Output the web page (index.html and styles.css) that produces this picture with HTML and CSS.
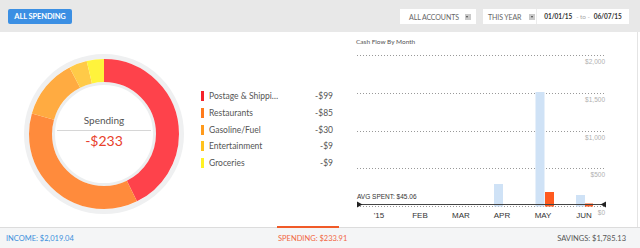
FILE: index.html
```html
<!DOCTYPE html>
<html>
  <head>
    <title>Spending</title>
    <link rel="stylesheet" href="styles.css">
  </head>
  <body>
    <div class="topbar">
      <button class="btn-primary">All Spending</button>
      <div class="filters">
        <div class="select accounts">All Accounts <span class="caret"></span></div>
        <div class="range">
          <div class="select period">This Year <span class="caret"></span></div>
          <div class="dates">
            <b>01/01/15</b><span class="to">- to -</span><b>06/07/15</b>
          </div>
        </div>
      </div>
    </div>

    <div class="main">
      <div class="donut-panel">
        <div class="donut">
          <svg width="164" height="164" viewBox="0 0 164 164">
            <circle cx="82" cy="82" r="77.5" class="ring-outer" />
            <circle cx="82" cy="82" r="50.5" class="ring-inner" />
            <g transform="rotate(-90 82 82)">
              <circle cx="82" cy="82" r="63.5" class="seg" stroke="#fe424b" stroke-dasharray="170.25 398.98" stroke-dashoffset="0" />
              <circle cx="82" cy="82" r="63.5" class="seg" stroke="#ff8b3c" stroke-dasharray="146.18 398.98" stroke-dashoffset="-170.25" />
              <circle cx="82" cy="82" r="63.5" class="seg" stroke="#ffab41" stroke-dasharray="51.59 398.98" stroke-dashoffset="-316.43" />
              <circle cx="82" cy="82" r="63.5" class="seg" stroke="#ffca48" stroke-dasharray="15.48 398.98" stroke-dashoffset="-368.02" />
              <circle cx="82" cy="82" r="63.5" class="seg" stroke="#fff33c" stroke-dasharray="15.48 398.98" stroke-dashoffset="-383.50" />
            </g>
          </svg>
          <div class="donut-center">
            <div class="donut-label">Spending</div>
            <div class="donut-rule"></div>
            <div class="donut-value">-$233</div>
          </div>
        </div>

        <ul class="legend">
          <li><span class="swatch" style="background:#f5222b"></span><span class="name">Postage &amp; Shippi…</span><span class="amount">-$99</span></li>
          <li><span class="swatch" style="background:#ff7a1c"></span><span class="name">Restaurants</span><span class="amount">-$85</span></li>
          <li><span class="swatch" style="background:#ff9a1c"></span><span class="name">Gasoline/Fuel</span><span class="amount">-$30</span></li>
          <li><span class="swatch" style="background:#ffc21e"></span><span class="name">Entertainment</span><span class="amount">-$9</span></li>
          <li><span class="swatch" style="background:#fff224"></span><span class="name">Groceries</span><span class="amount">-$9</span></li>
        </ul>
      </div>

      <div class="chart-panel">
        <svg class="cashflow" width="297" height="195" viewBox="0 0 297 195">
          <text x="16" y="12" class="chart-title">Cash Flow By Month</text>

          <line x1="17" x2="265" y1="23.5" y2="23.5" class="grid" />
          <line x1="17" x2="265" y1="61.5" y2="61.5" class="grid" />
          <line x1="17" x2="265" y1="99.5" y2="99.5" class="grid" />
          <line x1="17" x2="265" y1="136.5" y2="136.5" class="grid" />
          <line x1="17" x2="265" y1="174.5" y2="174.5" class="grid" />

          <text x="265" y="31.5" class="axis-label">$2,000</text>
          <text x="265" y="69.5" class="axis-label">$1,500</text>
          <text x="265" y="107.5" class="axis-label">$1,000</text>
          <text x="265" y="144.5" class="axis-label">$500</text>
          <text x="265" y="182.5" class="axis-label">$0</text>

          <rect x="154" y="152" width="9" height="22.5" class="bar-income" />
          <rect x="195.5" y="60" width="9" height="114.5" class="bar-income" />
          <rect x="205" y="160" width="9" height="14.5" class="bar-spend" />
          <rect x="236" y="163" width="9" height="11.5" class="bar-income" />
          <rect x="245" y="171.5" width="8" height="3" class="bar-spend" />

          <line x1="18" x2="264" y1="172.5" y2="172.5" class="avg-line" />
          <polygon points="17,169.5 22.5,172.5 17,175.5" class="avg-mark" />
          <polygon points="266,169.5 266,175.5 260.5,172.5" class="avg-mark" />
          <text x="17" y="167" class="avg-label">AVG SPENT: $45.06</text>

          <text x="39" y="185.5" class="month">'15</text>
          <text x="80" y="185.5" class="month">FEB</text>
          <text x="121" y="185.5" class="month">MAR</text>
          <text x="162" y="185.5" class="month">APR</text>
          <text x="203" y="185.5" class="month">MAY</text>
          <text x="244" y="185.5" class="month">JUN</text>
        </svg>
      </div>
    </div>

    <div class="totals">
      <span class="income">Income: $2,019.04</span>
      <span class="spending">Spending: $233.91</span>
      <span class="savings">Savings: $1,785.13</span>
    </div>
  </body>
</html>
```

FILE: styles.css
```css
body {
  margin: 0;
  width: 640px;
  height: 248px;
  overflow: hidden;
  background: #fff;
  font-family: Lato, "Open Sans", Arial, sans-serif;
  color: #555;
}

/* 顶部工具栏 */
.topbar {
  height: 32px;
  box-sizing: border-box;
  padding: 9px 11px 0 8px;
  background: #e8e8e8;
  display: flex;
  align-items: flex-start;
  justify-content: space-between;
}

.btn-primary {
  width: 64px;
  height: 15px;
  padding: 0;
  border: none;
  border-radius: 2px;
  background: #3b8fe3;
  color: #fff;
  font-family: Lato, sans-serif;
  font-weight: bold;
  font-size: 7.5px;
  text-transform: uppercase;
  letter-spacing: -0.1px;
}

.filters {
  display: flex;
  gap: 7px;
}

.select {
  height: 15px;
  box-sizing: border-box;
  display: flex;
  align-items: center;
  flex-shrink: 0;
  white-space: nowrap;
  background: #fff;
  font-size: 7px;
  color: #666;
  text-transform: uppercase;
  letter-spacing: -0.1px;
}

.accounts {
  width: 76px;
  padding-left: 9px;
}

.accounts .caret {
  margin-left: 6px;
}

.caret {
  position: relative;
  flex-shrink: 0;
  width: 6px;
  height: 6px;
  background: #c9c9c9;
}

.caret::after {
  content: "";
  position: absolute;
  left: 1.5px;
  top: 2px;
  border-left: 1.5px solid transparent;
  border-right: 1.5px solid transparent;
  border-top: 2px solid #444;
}

.range {
  display: flex;
  width: 146px;
  height: 15px;
  background: #fff;
}

.period {
  width: 54px;
  padding-left: 5px;
  gap: 8px;
  border-right: 1px solid #ececec;
}

.dates {
  flex: 1;
  display: flex;
  align-items: center;
  justify-content: center;
  white-space: nowrap;
  font-size: 6.5px;
  letter-spacing: -0.1px;
  color: #333;
}

.dates b {
  font-weight: bold;
}

.to {
  color: #aaa;
  margin: 0 4px;
}

/* 主体区域 */
.main {
  height: 195px;
  display: flex;
}

.donut-panel {
  width: 340px;
  display: flex;
  align-items: flex-start;
  box-sizing: border-box;
  padding: 20px 0 0 22px;
}

.donut {
  position: relative;
  width: 164px;
  height: 164px;
}

.donut svg {
  display: block;
}

.ring-outer {
  fill: none;
  stroke: #eff0f1;
  stroke-width: 5;
}

.ring-inner {
  fill: #fff;
  stroke: #eceeef;
  stroke-width: 3;
}

.seg {
  fill: none;
  stroke-width: 23;
}

.donut-center {
  position: absolute;
  top: 61px;
  left: 0;
  width: 164px;
  display: flex;
  flex-direction: column;
  align-items: center;
}

.donut-label {
  line-height: 14px;
  font-size: 10px;
  color: #555;
}

.donut-rule {
  width: 94px;
  height: 1px;
  margin-top: 3px;
  background: #d6d6d6;
}

.donut-value {
  margin-top: 1px;
  line-height: 18px;
  font-size: 14px;
  color: #e8402a;
}

.legend {
  list-style: none;
  margin: 36px 0 0 15px;
  padding: 0;
  width: 132px;
}

.legend li {
  height: 16.7px;
  display: flex;
  align-items: center;
  font-size: 8.5px;
  color: #555;
}

.swatch {
  width: 3px;
  height: 10px;
  margin-right: 5px;
}

.name {
  white-space: nowrap;
}

.amount {
  margin-left: auto;
}

/* 现金流图表 */
.chart-panel {
  width: 297px;
  border-right: 1px solid #e4e4e4;
}

.cashflow {
  display: block;
}

.chart-title {
  font-family: Lato, sans-serif;
  font-size: 6.5px;
  fill: #555;
}

.grid {
  stroke: #999;
  stroke-width: 1;
  stroke-dasharray: 1 2;
}

.axis-label {
  font-family: "Liberation Sans", Arial, sans-serif;
  font-size: 6.5px;
  fill: #b0b0b0;
  text-anchor: end;
}

.bar-income {
  fill: #cfe2f6;
}

.bar-spend {
  fill: #ff5a1f;
}

.avg-line {
  stroke: #444;
  stroke-width: 1;
}

.avg-mark {
  fill: #222;
}

.avg-label {
  font-family: "Liberation Sans", Arial, sans-serif;
  font-size: 6.5px;
  fill: #333;
}

.month {
  font-family: "Liberation Sans", Arial, sans-serif;
  font-size: 8px;
  fill: #333;
  text-anchor: middle;
}

/* 底部汇总 */
.totals {
  height: 21px;
  box-sizing: border-box;
  border-top: 1px solid #dcdcdc;
  background: #f4f5f6;
  display: flex;
  align-items: center;
  padding: 0 14px 0 6px;
  font-size: 7.5px;
  text-transform: uppercase;
}

.income {
  width: 272px;
  color: #3b8fdc;
}

.spending {
  position: relative;
  color: #f2653f;
}

.spending::before {
  content: "";
  position: absolute;
  left: -1px;
  top: -8px;
  width: 62px;
  height: 2px;
  background: #f05a28;
}

.savings {
  margin-left: auto;
  color: #555;
}
```
